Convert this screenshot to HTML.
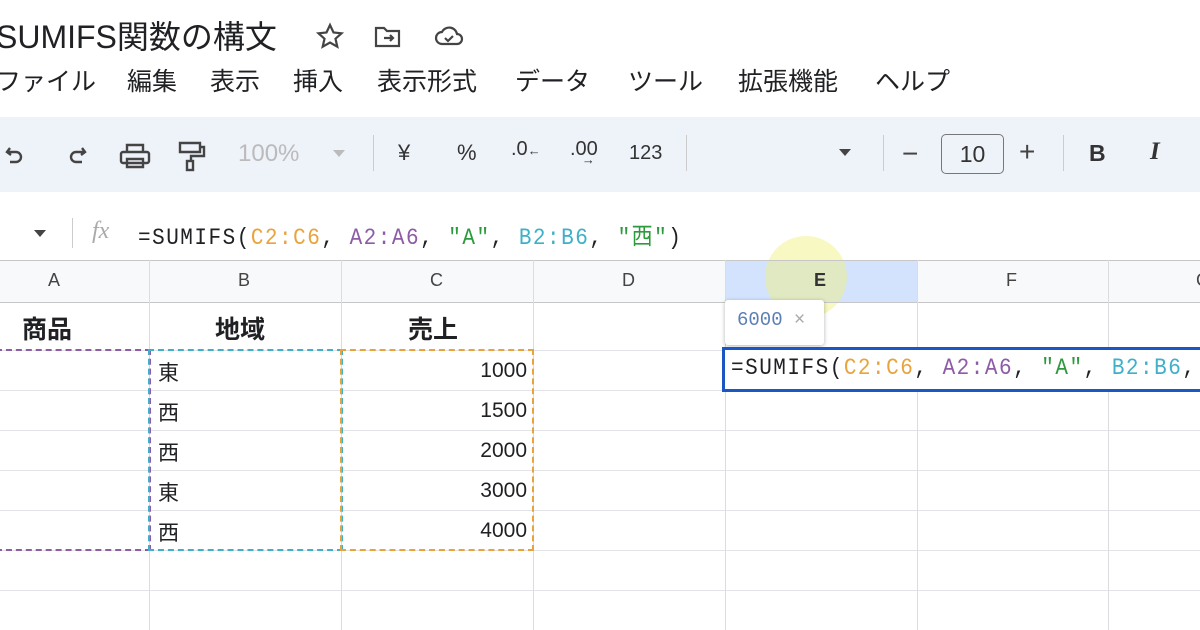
<!DOCTYPE html><html><head><meta charset="utf-8"><style>
body{margin:0;width:1200px;height:630px;overflow:hidden;background:#fff;font-family:"Liberation Sans","Noto Sans CJK JP",sans-serif;position:relative;color:#202124}
.a{position:absolute}
.mono{font-family:"Liberation Mono","Noto Sans CJK JP",monospace}
.vl{position:absolute;top:260px;bottom:0;width:1px;background:#dadce0}
.hl{position:absolute;left:0;right:0;height:1px;background:#e1e3e6}
.cell{position:absolute;font-size:21px}
.m{position:absolute;top:62px;font-size:25px}
</style></head><body>
<div class="a" style="left:-4px;top:12px;font-size:32px">SUMIFS関数の構文</div>
<svg class="a" style="left:314px;top:22px" width="160" height="28" viewBox="0 0 160 28" fill="none" stroke="#444" stroke-width="2.2"><path d="M16 3l3.5 7.5 8 .8-6 5.4 1.8 8-7.3-4.2-7.3 4.2 1.8-8-6-5.4 8-.8z"/><path d="M62 6h8l3 3h12v15H62z"/><path d="M70 16h9m-3-3l3 3-3 3"/><path d="M128 22a6 6 0 0 1 0-12 8 8 0 0 1 15 2 5 5 0 0 1 0 10z"/><path d="M131 16l3 3 5-5"/></svg>
<div class="m" style="left:-4px">ファイル</div><div class="m" style="left:127px">編集</div><div class="m" style="left:210px">表示</div><div class="m" style="left:293px">挿入</div><div class="m" style="left:377px">表示形式</div><div class="m" style="left:515px">データ</div><div class="m" style="left:628px">ツール</div><div class="m" style="left:738px">拡張機能</div><div class="m" style="left:875px">ヘルプ</div>
<div class="a" style="left:0;top:117px;width:1200px;height:75px;background:#eef2f9"></div>
<svg class="a" style="left:0;top:135px" width="220" height="40" viewBox="0 0 220 40" fill="none" stroke="#444" stroke-width="2.4"><path d="M10 13l-3 4 4 3M7 17h9a5 5 0 0 1 0 10h-6"/><path d="M82 13l3 4-4 3M85 17h-9a5 5 0 0 0 0 10h6"/><rect x="121" y="17" width="28" height="11" rx="2"/><path d="M127 17v-7h16v7M127 24h16v8h-16z"/><path d="M180 8h20v9h-20zM200 12h4v9h-13v5"/><rect x="187" y="26" width="6" height="9"/></svg>
<div class="a" style="left:238px;top:140px;font-size:24px;color:#bbb">100%</div>
<div class="a" style="left:333px;top:150px;border:6px solid transparent;border-top:7px solid #bbb"></div>
<div class="a" style="left:373px;top:135px;width:1px;height:36px;background:#ccc"></div>
<div class="a" style="left:398px;top:140px;font-size:22px;color:#333">¥</div>
<div class="a" style="left:457px;top:140px;font-size:22px;color:#333">%</div>
<div class="a" style="left:511px;top:138px;font-size:20px;color:#333">.0<span style="font-size:13px">←</span></div>
<div class="a" style="left:570px;top:138px;font-size:20px;color:#333">.00<span style="font-size:13px;position:relative;left:-16px;top:9px">→</span></div>
<div class="a" style="left:629px;top:142px;font-size:20px;color:#333">123</div>
<div class="a" style="left:686px;top:135px;width:1px;height:36px;background:#ccc"></div>
<div class="a" style="left:839px;top:149px;border:6px solid transparent;border-top:7px solid #444"></div>
<div class="a" style="left:883px;top:135px;width:1px;height:36px;background:#ccc"></div>
<div class="a" style="left:902px;top:138px;font-size:28px;color:#444">−</div>
<div class="a" style="left:941px;top:134px;width:61px;height:38px;border:1.5px solid #777;border-radius:5px;font-size:23px;text-align:center;line-height:38px;color:#333">10</div>
<div class="a" style="left:1019px;top:136px;font-size:28px;color:#444">+</div>
<div class="a" style="left:1063px;top:135px;width:1px;height:36px;background:#ccc"></div>
<div class="a" style="left:1089px;top:140px;font-size:23px;font-weight:bold;color:#333">B</div>
<div class="a" style="left:1150px;top:138px;font-size:25px;font-style:italic;font-family:'Liberation Serif',serif;font-weight:bold;color:#333">I</div>
<div class="a" style="left:34px;top:230px;border:6px solid transparent;border-top:7px solid #444"></div>
<div class="a" style="left:72px;top:218px;width:1px;height:30px;background:#ccc"></div>
<div class="a" style="left:92px;top:218px;font-size:24px;font-style:italic;font-family:'Liberation Serif',serif;color:#aaa">fx</div>
<div class="a mono" style="left:138px;top:218px;font-size:21px;letter-spacing:1.5px;transform:scaleY(1.12);transform-origin:top left">=SUMIFS(<span style="color:#e8a33d">C2:C6</span>, <span style="color:#8e5ba6">A2:A6</span>, <span style="color:#2e9a3e">"A"</span>, <span style="color:#3fb0c8">B2:B6</span>, <span style="color:#2e9a3e">"西"</span>)</div>
<div class="a" style="left:0;top:260px;width:1200px;height:43px;background:#f8f9fa"></div>
<div class="a" style="left:725px;top:260px;width:192px;height:43px;background:#d3e3fd"></div>
<div class="a" style="left:765px;top:236px;width:82px;height:82px;border-radius:50%;background:rgba(240,240,120,.45)"></div>
<div class="hl" style="top:260px;background:#c7c7c7"></div><div class="hl" style="top:302px;background:#c7c7c7"></div>
<div class="hl" style="top:350px"></div><div class="hl" style="top:390px"></div><div class="hl" style="top:430px"></div><div class="hl" style="top:470px"></div><div class="hl" style="top:510px"></div><div class="hl" style="top:550px"></div><div class="hl" style="top:590px"></div>
<div class="vl" style="left:149px"></div><div class="vl" style="left:341px"></div><div class="vl" style="left:533px"></div><div class="vl" style="left:725px"></div><div class="vl" style="left:917px"></div><div class="vl" style="left:1108px"></div>
<div class="cell" style="left:48px;top:270px;font-size:18px;color:#444">A</div>
<div class="cell" style="left:238px;top:270px;font-size:18px;color:#444">B</div>
<div class="cell" style="left:430px;top:270px;font-size:18px;color:#444">C</div>
<div class="cell" style="left:622px;top:270px;font-size:18px;color:#444">D</div>
<div class="cell" style="left:814px;top:270px;font-size:18px;font-weight:bold;color:#333">E</div>
<div class="cell" style="left:1006px;top:270px;font-size:18px;color:#444">F</div>
<div class="cell" style="left:1196px;top:270px;font-size:18px;color:#444">G</div>
<div class="cell" style="left:22px;top:310px;font-size:25px;font-weight:bold">商品</div>
<div class="cell" style="left:215px;top:310px;font-size:25px;font-weight:bold">地域</div>
<div class="cell" style="left:408px;top:310px;font-size:25px;font-weight:bold">売上</div>
<div class="cell" style="left:158px;top:357px">東</div><div class="cell" style="left:158px;top:397px">西</div><div class="cell" style="left:158px;top:437px">西</div><div class="cell" style="left:158px;top:477px">東</div><div class="cell" style="left:158px;top:517px">西</div>
<div class="cell" style="left:470px;top:359px;width:57px;text-align:right">1000</div>
<div class="cell" style="left:470px;top:399px;width:57px;text-align:right">1500</div>
<div class="cell" style="left:470px;top:439px;width:57px;text-align:right">2000</div>
<div class="cell" style="left:470px;top:479px;width:57px;text-align:right">3000</div>
<div class="cell" style="left:470px;top:519px;width:57px;text-align:right">4000</div>
<div class="a" style="left:-4px;top:349px;width:151px;height:198px;border:2.5px dashed #8e5ba6"></div>
<div class="a" style="left:148px;top:349px;width:191px;height:198px;border:2.5px dashed #3fb0c8"></div>
<div class="a" style="left:340px;top:349px;width:190px;height:198px;border:2.5px dashed #e8a33d"></div>
<div class="a" style="left:725px;top:300px;width:99px;height:45px;background:#fff;box-shadow:0 1px 4px rgba(0,0,0,.3);border-radius:3px"></div>
<div class="a mono" style="left:737px;top:309px;font-size:19px;color:#5b7fb5">6000 <span style="color:#aaa;font-family:'Liberation Sans'">×</span></div>
<div class="a" style="left:722px;top:347px;width:490px;height:45px;border:3px solid #1a56c4;box-sizing:border-box;background:#fff"></div>
<div class="a mono" style="left:731px;top:356px;font-size:21px;letter-spacing:1.5px;white-space:nowrap;transform:scaleY(1.12);transform-origin:top left">=SUMIFS(<span style="color:#e8a33d">C2:C6</span>, <span style="color:#8e5ba6">A2:A6</span>, <span style="color:#2e9a3e">"A"</span>, <span style="color:#3fb0c8">B2:B6</span>,</div>
</body></html>
